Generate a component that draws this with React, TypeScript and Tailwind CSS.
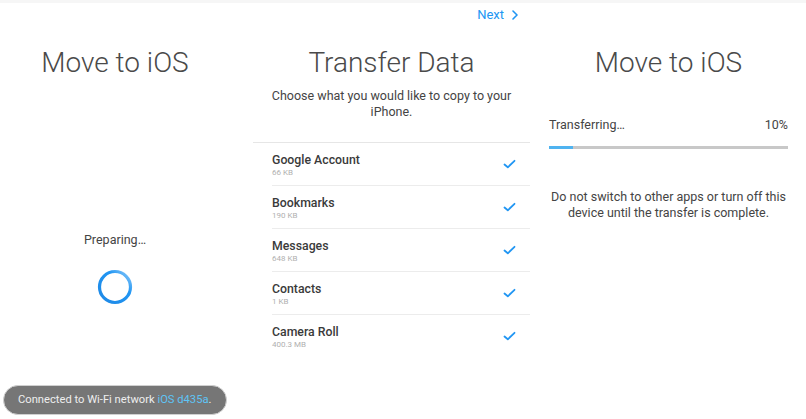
import React from 'react';

const items = [
  { name: 'Google Account', size: '66 KB' },
  { name: 'Bookmarks', size: '190 KB' },
  { name: 'Messages', size: '648 KB' },
  { name: 'Contacts', size: '1 KB' },
  { name: 'Camera Roll', size: '400.3 MB' },
];

function Check() {
  return (
    <svg width="13" height="10" viewBox="0 0 13 10" fill="none">
      <path d="M1.5 5.5 L4.8 8.3 L11.5 1.8" stroke="#2196f3" strokeWidth="1.8" strokeLinecap="round" strokeLinejoin="round" />
    </svg>
  );
}

function Spinner() {
  return (
    <svg width="36" height="36" viewBox="0 0 36 36">
      <defs>
        <linearGradient id="spin" x1="1" y1="0" x2="0" y2="1">
          <stop offset="0" stopColor="#90caf9" />
          <stop offset="0.35" stopColor="#2196f3" />
          <stop offset="1" stopColor="#1e88e5" />
        </linearGradient>
      </defs>
      <circle cx="18" cy="18" r="15.5" fill="none" stroke="url(#spin)" strokeWidth="3.2" />
    </svg>
  );
}

export default function App() {
  return (
    <div className="w-[806px] h-[419px] bg-white border-t-[3px] border-[#f6f6f6] flex font-['Roboto',sans-serif] text-[#444] overflow-hidden">
      {/* preparing screen */}
      <div className="w-[230px] flex flex-col items-center">
        <h1 className="mt-[43px] text-[28px] leading-[34px] font-light text-[#4a4a4a]">Move to iOS</h1>
        <p className="mt-[152px] text-[12.5px] leading-4">Preparing…</p>
        <div className="mt-[21px]">
          <Spinner />
        </div>
        <div className="mt-auto mb-[4px] ml-[3px] self-start w-[224px] h-[30px] rounded-full bg-[#767676] border border-[#d0d0d0] flex items-center pl-[14px] text-[11.2px] text-[#eeeeee]">
          <span>Connected to Wi-Fi network <span className="text-[#5ec4f5]">iOS d435a</span>.</span>
        </div>
      </div>

      {/* transfer data screen */}
      <div className="ml-[23px] w-[277px] flex flex-col">
        <div className="h-[23px] flex items-center justify-end pr-[12px] gap-[8px] text-[13px] text-[#2196f3]">
          <span>Next</span>
          <svg width="6" height="10" viewBox="0 0 6 10" fill="none">
            <path d="M1 1 L5 5 L1 9" stroke="#2196f3" strokeWidth="1.6" strokeLinecap="round" strokeLinejoin="round" />
          </svg>
        </div>
        <h1 className="mt-[20px] text-center text-[28px] leading-[34px] font-light text-[#4a4a4a]">Transfer Data</h1>
        <p className="mt-[8px] px-[12px] text-center text-[12.5px] leading-4">Choose what you would like to copy to your iPhone.</p>
        <div className="mt-[22px] border-t border-[#e6e6e6]">
          {items.map((item, i) => (
            <div key={item.name} className={`ml-[19px] flex items-center pr-[14px] ${i < items.length - 1 ? 'border-b border-[#ececec]' : ''}`}>
              <div className="flex-1 pt-[9px] pb-[7px]">
                <p className="text-[12.3px] leading-4 font-medium text-[#3a3a3a]">{item.name}</p>
                <p className="text-[8px] leading-[10px] text-[#b0b0b0]">{item.size}</p>
              </div>
              <Check />
            </div>
          ))}
        </div>
      </div>

      {/* transferring screen */}
      <div className="ml-[19px] w-[239px] flex flex-col">
        <h1 className="mt-[43px] text-center text-[28px] leading-[34px] font-light text-[#4a4a4a]">Move to iOS</h1>
        <div className="mt-[37px] flex justify-between text-[12.5px] leading-4">
          <span>Transferring…</span>
          <span>10%</span>
        </div>
        <div className="mt-[13px] h-[3px] bg-[#c8c8c8]">
          <div className="h-full bg-[#4fb3f0]" style={{ width: '10%' }} />
        </div>
        <p className="mt-[40px] text-center text-[12.5px] leading-4">Do not switch to other apps or turn off this device until the transfer is complete.</p>
      </div>
    </div>
  );
}
